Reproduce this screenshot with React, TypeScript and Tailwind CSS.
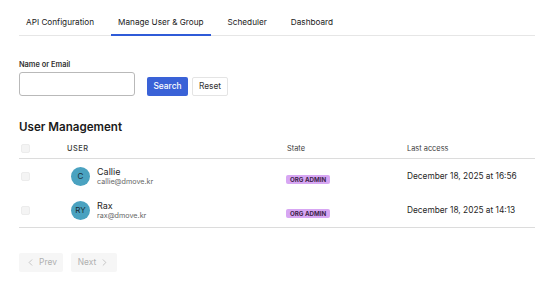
import { ChevronLeft, ChevronRight } from "lucide-react";

const tabs = ["API Configuration", "Manage User & Group", "Scheduler", "Dashboard"];

const users = [
  { initials: "C", name: "Callie", email: "callie@dmove.kr", role: "ORG ADMIN", lastAccess: "December 18, 2025 at 16:56" },
  { initials: "RY", name: "Rax", email: "rax@dmove.kr", role: "ORG ADMIN", lastAccess: "December 18, 2025 at 14:13" },
];

function Checkbox() {
  return <span className="block h-[9px] w-[9px] rounded-[2px] border border-[#ececec] bg-[#f4f4f4]" />;
}

export default function App() {
  return (
    <div className="min-h-screen bg-white font-['Inter',sans-serif] text-[#1f1f1f]">
      <div className="ml-[19px] w-[516px] pt-[11px]">
        <div className="flex gap-[10px] border-b border-[#e6e6e6]">
          {tabs.map((tab, i) => (
            <button
              key={tab}
              className={
                i === 1
                  ? "-mb-px flex h-[25px] items-center border-b-2 border-[#2f5bd8] px-[7px] text-[8.2px] text-[#222]"
                  : "-mb-px flex h-[25px] items-center border-b-2 border-transparent px-[7px] text-[8.2px] text-[#222]"
              }
            >
              {tab}
            </button>
          ))}
        </div>

        <div className="mt-[24px]">
          <label className="block text-[7.4px] font-semibold leading-[10px] text-[#333]">Name or Email</label>
          <div className="mt-[2px] flex items-end">
            <input className="h-[24px] w-[116px] rounded-[3px] border border-[#b9b9b9] bg-white" />
            <button className="ml-[12px] h-[19px] w-[41px] rounded-[2px] bg-[#3a62d7] text-[8.4px] font-medium text-white">
              Search
            </button>
            <button className="ml-[4px] h-[19px] w-[36px] rounded-[2px] border border-[#e4e4e4] bg-white text-[8.4px] text-[#333]">
              Reset
            </button>
          </div>
        </div>

        <h2 className="mt-[23px] text-[11.6px] font-semibold leading-[16px] text-[#1a1a1a]">User Management</h2>

        <div className="mt-[4px]">
          <div className="grid h-[20px] grid-cols-[48px_220px_120px_128px] items-center border-b border-[#dcdcdc] text-[7.4px] text-[#3a3a3a]">
            <div className="pl-[2px]">
              <Checkbox />
            </div>
            <div className="font-medium tracking-[0.5px]">USER</div>
            <div>State</div>
            <div>Last access</div>
          </div>
          <div className="border-b border-[#dcdcdc]">
            {users.map((u) => (
              <div key={u.email} className="grid h-[34px] grid-cols-[48px_220px_120px_128px] items-center">
                <div className="pl-[2px]">
                  <Checkbox />
                </div>
                <div className="flex items-center pl-[4px]">
                  <div className="flex h-[19px] w-[19px] items-center justify-center rounded-full bg-[#4aa2c0] text-[8px] text-[#1a2a33]">
                    {u.initials}
                  </div>
                  <div className="ml-[7px] flex flex-col">
                    <span className="text-[9px] leading-[11px] text-[#1f1f1f]">{u.name}</span>
                    <span className="text-[7.2px] leading-[10px] text-[#666]">{u.email}</span>
                  </div>
                </div>
                <div className="-ml-[1px]">
                  <span className="inline-flex h-[9px] items-center rounded-[2px] bg-[#d7a6f3] px-[4px] text-[6.2px] font-bold text-[#3a2348]">
                    {u.role}
                  </span>
                </div>
                <div className="text-[8.3px] text-[#1f1f1f]">{u.lastAccess}</div>
              </div>
            ))}
          </div>
        </div>

        <div className="mt-[25px] flex gap-[8px]">
          <button className="flex h-[19px] w-[44px] items-center justify-center gap-[3px] rounded-[2px] bg-[#f6f6f6] text-[8.4px] text-[#b0b0b0]">
            <ChevronLeft size={11} strokeWidth={1.5} />
            Prev
          </button>
          <button className="flex h-[19px] w-[46px] items-center justify-center gap-[3px] rounded-[2px] bg-[#f6f6f6] text-[8.4px] text-[#b0b0b0]">
            Next
            <ChevronRight size={11} strokeWidth={1.5} />
          </button>
        </div>
      </div>
    </div>
  );
}
